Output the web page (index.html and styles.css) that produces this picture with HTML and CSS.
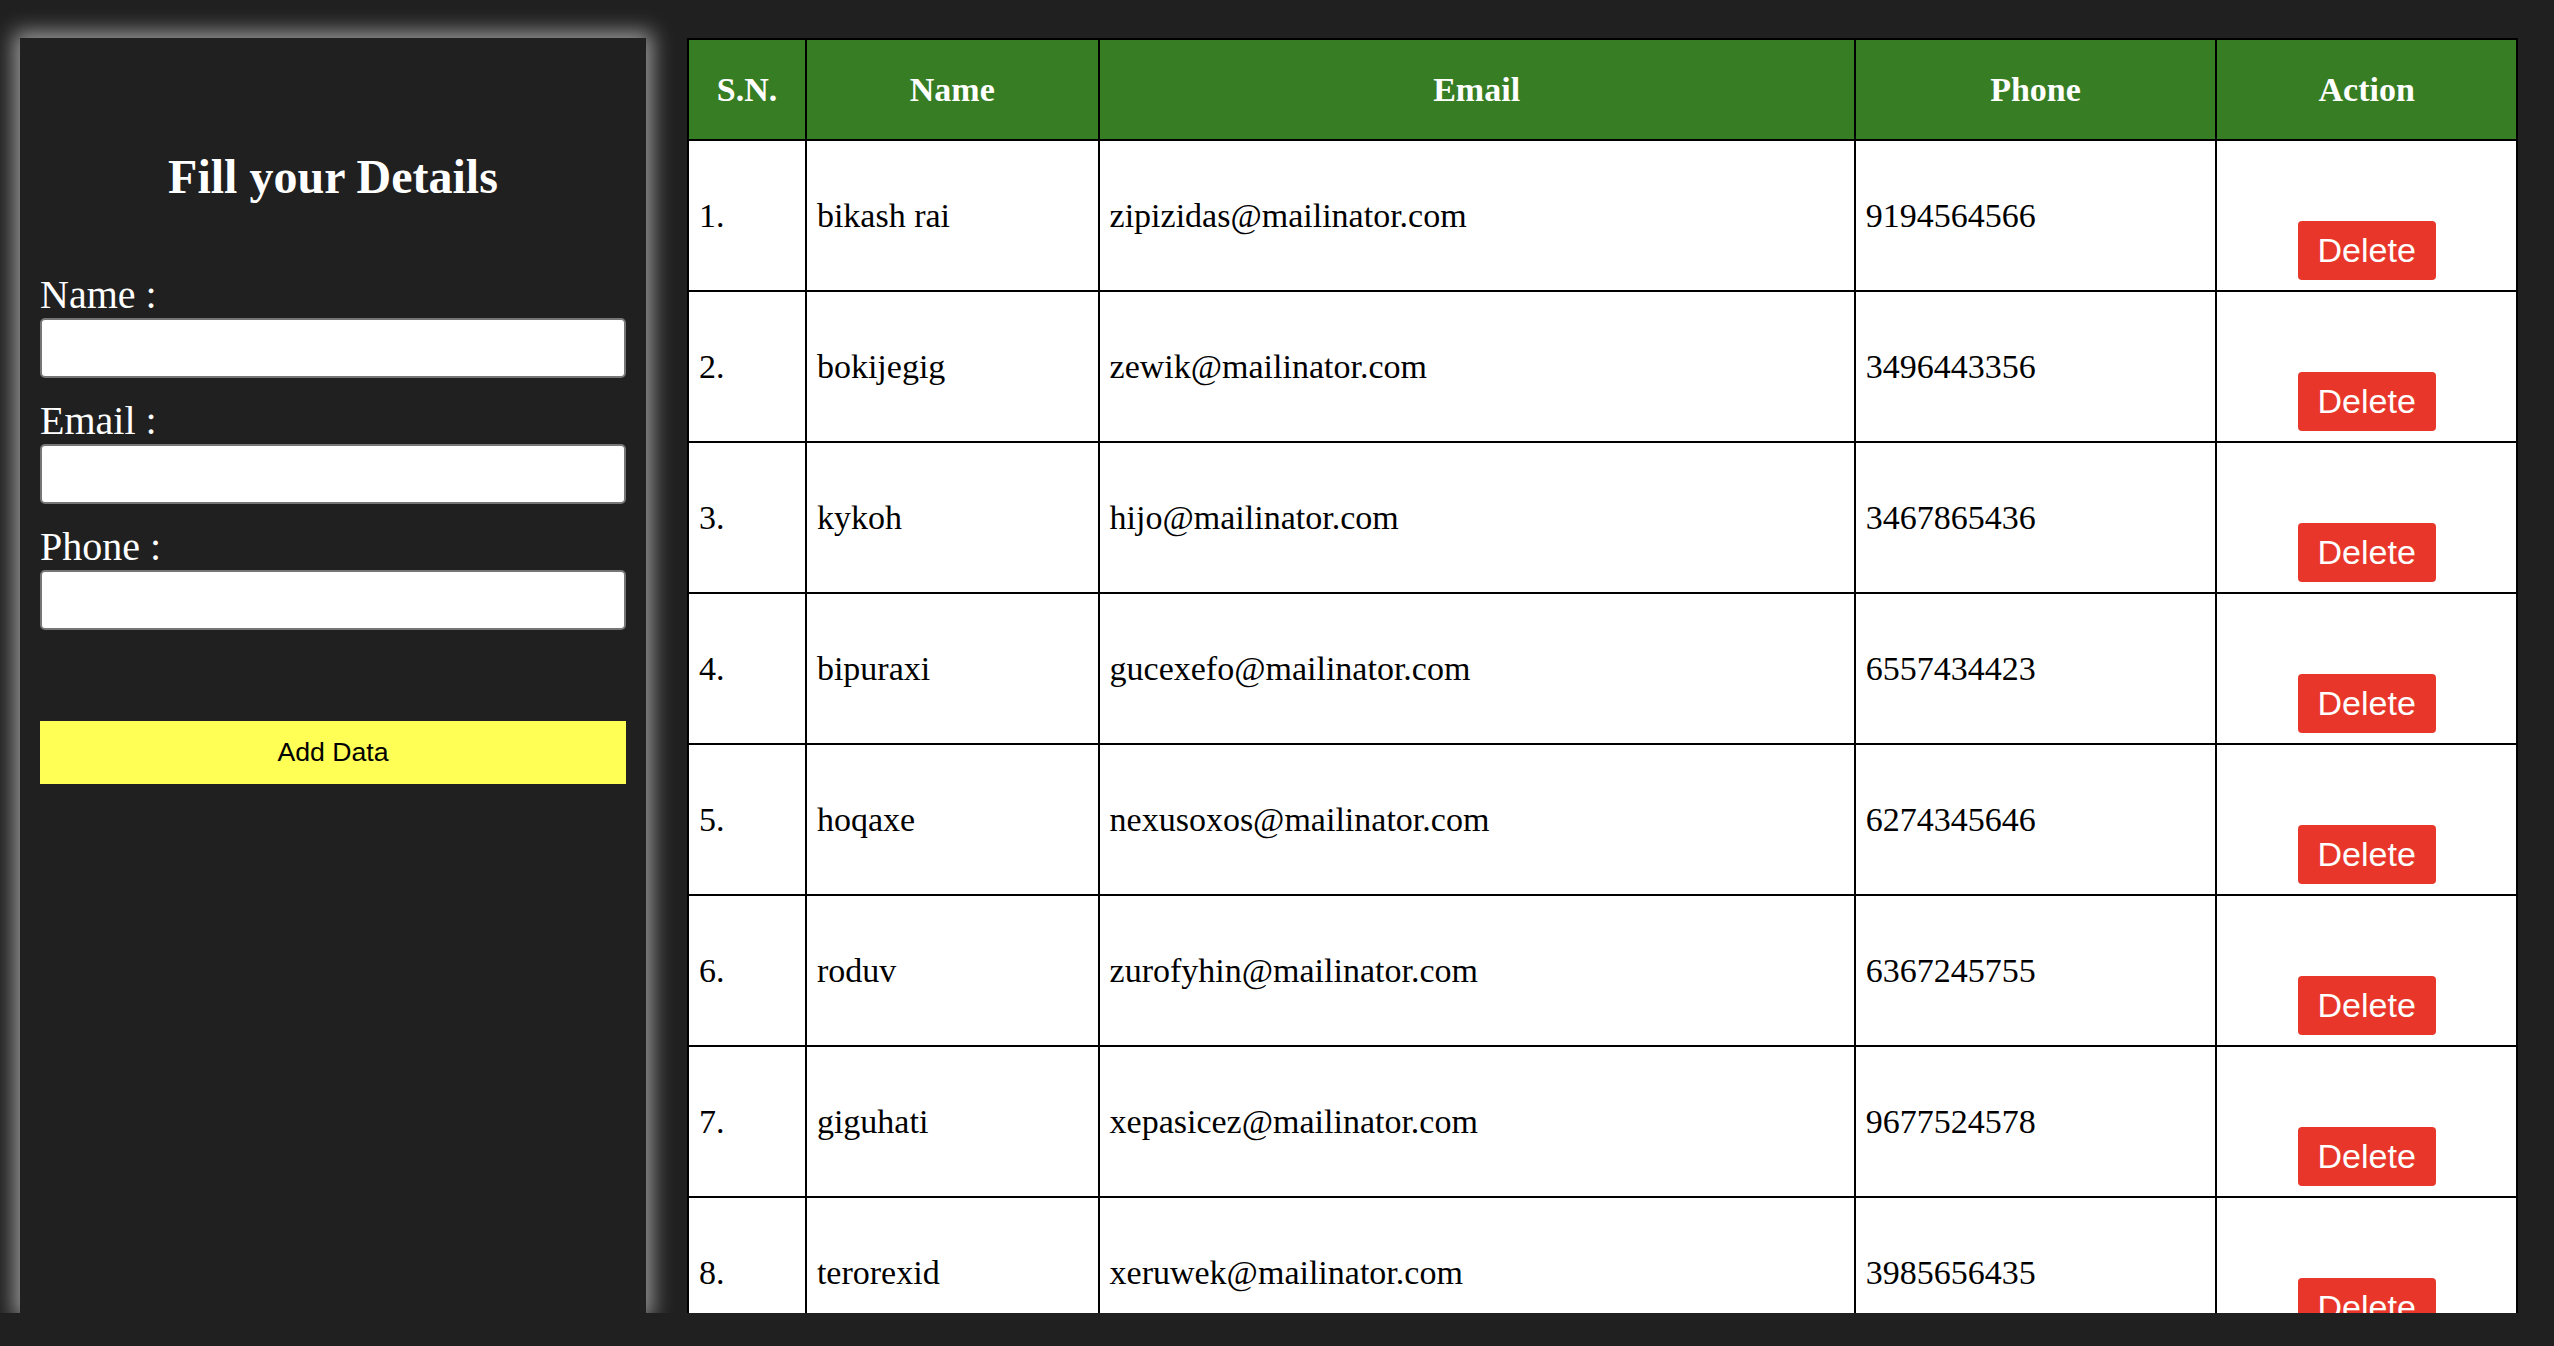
FILE: index.html
```html
<!DOCTYPE html>
<html lang="en">
<head>
  <meta charset="UTF-8" />
  <title>User Details</title>
  <link rel="stylesheet" href="styles.css">
</head>
<body>
  <div class="page-wrapper">

    <div class="form-box">
      <h2>Fill your Details</h2>
      <form id="userForm">
        <div class="form-group">
          <label for="name">Name :</label>
          <input type="text" id="name">
        </div>
        <div class="form-group">
          <label for="email">Email :</label>
          <input type="email" id="email">
        </div>
        <div class="form-group">
          <label for="phone">Phone :</label>
          <input type="text" id="phone">
        </div>
        <button type="submit" class="add-btn">Add Data</button>
      </form>
    </div>

    <div class="table-box">
      <table>
        <colgroup>
          <col class="col-sn">
          <col class="col-name">
          <col class="col-email">
          <col class="col-phone">
          <col class="col-action">
        </colgroup>
        <thead>
          <tr>
            <th>S.N.</th>
            <th>Name</th>
            <th>Email</th>
            <th>Phone</th>
            <th>Action</th>
          </tr>
        </thead>
        <tbody id="tableBody">
          <tr>
            <td>1.</td>
            <td>bikash rai</td>
            <td>zipizidas@mailinator.com</td>
            <td>9194564566</td>
            <td><button class="delete-btn">Delete</button></td>
          </tr>
          <tr>
            <td>2.</td>
            <td>bokijegig</td>
            <td>zewik@mailinator.com</td>
            <td>3496443356</td>
            <td><button class="delete-btn">Delete</button></td>
          </tr>
          <tr>
            <td>3.</td>
            <td>kykoh</td>
            <td>hijo@mailinator.com</td>
            <td>3467865436</td>
            <td><button class="delete-btn">Delete</button></td>
          </tr>
          <tr>
            <td>4.</td>
            <td>bipuraxi</td>
            <td>gucexefo@mailinator.com</td>
            <td>6557434423</td>
            <td><button class="delete-btn">Delete</button></td>
          </tr>
          <tr>
            <td>5.</td>
            <td>hoqaxe</td>
            <td>nexusoxos@mailinator.com</td>
            <td>6274345646</td>
            <td><button class="delete-btn">Delete</button></td>
          </tr>
          <tr>
            <td>6.</td>
            <td>roduv</td>
            <td>zurofyhin@mailinator.com</td>
            <td>6367245755</td>
            <td><button class="delete-btn">Delete</button></td>
          </tr>
          <tr>
            <td>7.</td>
            <td>giguhati</td>
            <td>xepasicez@mailinator.com</td>
            <td>9677524578</td>
            <td><button class="delete-btn">Delete</button></td>
          </tr>
          <tr>
            <td>8.</td>
            <td>terorexid</td>
            <td>xeruwek@mailinator.com</td>
            <td>3985656435</td>
            <td><button class="delete-btn">Delete</button></td>
          </tr>
        </tbody>
      </table>
    </div>

  </div>
</body>
</html>
```

FILE: styles.css
```css
body {
  margin: 0;
  padding: 0;
  background-color: #202020;
  font-family: 'Liberation Serif', 'Times New Roman', serif;
}

.page-wrapper {
  display: flex;
  align-items: flex-start;
  gap: 41px;
  padding: 38px 36px 0 20px;
}

/* left form */
.form-box {
  width: 626px;
  height: 1275px;
  box-sizing: border-box;
  padding: 20px;
  background-color: #202020;
  box-shadow: 0 0 20px 6px rgba(255, 255, 255, 0.55);
}

.form-box h2 {
  margin: 91px 0 68px;
  font-size: 48px;
  line-height: 55px;
  text-align: center;
  color: #fff;
}

.form-group {
  margin-bottom: 20px;
}

.form-group label {
  display: block;
  font-size: 40px;
  line-height: 46px;
  color: #fff;
}

.form-group input {
  display: block;
  width: 100%;
  height: 60px;
  box-sizing: border-box;
  border: 2px solid #767676;
  border-radius: 5px;
  background-color: #fff;
}

.add-btn {
  display: block;
  width: 100%;
  height: 63px;
  margin-top: 91px;
  border: none;
  background-color: #ffff55;
  color: #000;
  font-family: 'Liberation Sans', Arial, sans-serif;
  font-size: 26.67px;
  cursor: pointer;
}

/* right table */
.table-box {
  flex: 1;
  height: 1275px;
  overflow: hidden;
}

table {
  width: 100%;
  border-collapse: collapse;
  background-color: #fff;
  font-size: 34px;
}

.col-sn { width: 118px; }
.col-name { width: 293px; }
.col-email { width: 757px; }
.col-phone { width: 362px; }
.col-action { width: 301px; }

th,
td {
  border: 2px solid #000;
  line-height: 39px;
}

th {
  padding: 30px 10px;
  background-color: #377d23;
  color: #fff;
  font-weight: bold;
}

td {
  padding: 10px;
  color: #000;
}

.delete-btn {
  display: block;
  margin: 70px auto 0;
  padding: 10px 20px;
  border: none;
  border-radius: 4px;
  background-color: #e8372a;
  color: #fff;
  font-family: 'Liberation Sans', Arial, sans-serif;
  font-size: 34px;
  line-height: 39px;
  cursor: pointer;
}
```
